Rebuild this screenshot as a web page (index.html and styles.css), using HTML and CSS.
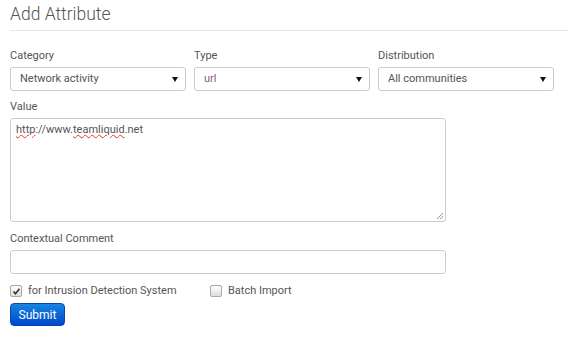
FILE: index.html
```html
<!DOCTYPE html>
<html lang="en">
<head>
    <meta charset="UTF-8">
    <title>Add Attribute</title>
    <link rel="stylesheet" href="styles.css">
</head>
<body>
    <div class="page">
        <h2>Add Attribute</h2>
        <hr>

        <div class="row">
            <div class="field">
                <label>Category</label>
                <div class="select"><span>Network activity</span></div>
            </div>
            <div class="field">
                <label>Type</label>
                <div class="select"><span class="url">url</span></div>
            </div>
            <div class="field">
                <label>Distribution</label>
                <div class="select"><span>All communities</span></div>
            </div>
        </div>

        <label>Value</label>
        <div class="textarea">
            <span class="typo">http</span>://www.<span class="typo">teamliquid</span>.net
            <svg class="grip" width="8" height="8" viewBox="0 0 8 8">
                <path d="M1 7 L7 1 M4 7 L7 4" stroke="#999" stroke-width="1"/>
            </svg>
        </div>

        <label>Contextual Comment</label>
        <div class="input"></div>

        <div class="checks">
            <div class="check">
                <span class="box">
                    <svg width="9" height="9" viewBox="0 0 9 9">
                        <path d="M1.5 4.5 L3.5 6.8 L7.5 1.8" stroke="#333" stroke-width="1.6" fill="none"/>
                    </svg>
                </span>
                for Intrusion Detection System
            </div>
            <div class="check">
                <span class="box"></span>
                Batch Import
            </div>
        </div>

        <button>Submit</button>
    </div>
</body>
</html>
```

FILE: styles.css
```css
* {
    box-sizing: border-box;
    margin: 0;
    padding: 0;
}
body {
    background: #fff;
    font-family: 'Roboto', 'Liberation Sans', sans-serif;
    color: #555;
    font-size: 11px;
}
.page {
    padding-left: 10px;
}
h2 {
    font-weight: 300;
    font-size: 17.5px;
    line-height: 20px;
    color: #555;
    padding-top: 4px;
}
hr {
    border: none;
    border-top: 1px solid #e5e5e5;
    margin: 6px 0 15px;
}
label {
    display: block;
    line-height: 16px;
    padding-top: 2px;
    color: #555;
    margin-bottom: 3px;
}
.row {
    display: flex;
    gap: 8px;
}
.field {
    width: 176px;
}
.select {
    position: relative;
    height: 24px;
    border: 1px solid #ccc;
    border-radius: 3px;
    padding-left: 9px;
    line-height: 22px;
    color: #555;
    margin-bottom: 6px;
}
.select::after {
    content: "";
    position: absolute;
    right: 7px;
    top: 9px;
    border-left: 3px solid transparent;
    border-right: 3px solid transparent;
    border-top: 5px solid #111;
}
.url {
    color: #8e5a8a;
}
.textarea {
    position: relative;
    width: 436px;
    height: 104px;
    border: 1px solid #ccc;
    border-radius: 3px;
    padding: 3px 5px;
    line-height: 16px;
    color: #555;
    margin-bottom: 7px;
}
.typo {
    text-decoration: underline wavy #e33;
    text-decoration-thickness: 1px;
}
.grip {
    position: absolute;
    right: 1px;
    bottom: 1px;
}
.input {
    width: 436px;
    height: 24px;
    border: 1px solid #ccc;
    border-radius: 3px;
    margin-bottom: 10px;
}
.checks {
    display: flex;
    line-height: 14px;
    color: #555;
    margin-bottom: 5px;
}
.check {
    display: flex;
    align-items: center;
    gap: 6px;
    width: 200px;
}
.box {
    width: 12px;
    height: 12px;
    border: 1px solid #aaa;
    border-radius: 2px;
    background: linear-gradient(#fff, #ddd);
    display: flex;
    align-items: center;
    justify-content: center;
}
button {
    font-family: 'Roboto', 'Liberation Sans', sans-serif;
    font-size: 12px;
    color: #fff;
    width: 55px;
    height: 23px;
    border: 1px solid #0a45b0;
    border-radius: 4px;
    background: linear-gradient(#1585e0, #0048cc);
}
```
